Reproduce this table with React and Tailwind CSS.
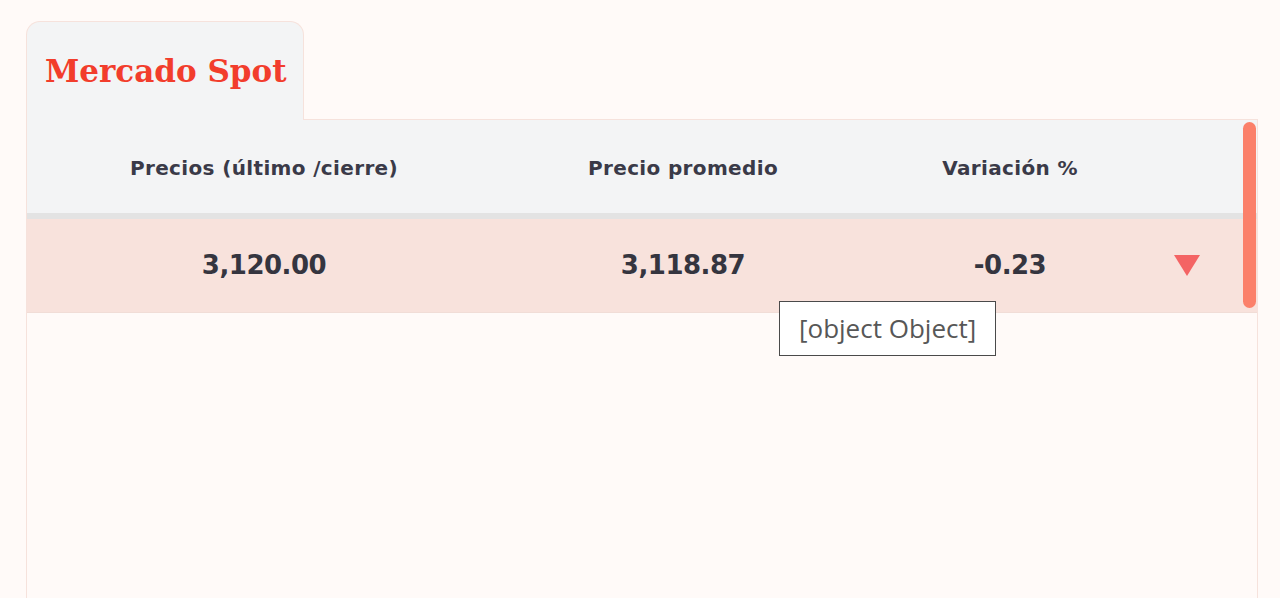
import React from "react";

const columns = [
  { label: "Precios (último /cierre)", value: "3,120.00", w: "w-[474px]" },
  { label: "Precio promedio", value: "3,118.87", w: "w-[364px]" },
  { label: "Variación %", value: "-0.23", w: "w-[290px]" },
];

function DownArrow() {
  return (
    <svg width="26" height="21" viewBox="0 0 26 21">
      <path d="M0 0 H26 L13 21 Z" fill="#f46464" />
    </svg>
  );
}

export default function App() {
  return (
    <div className="min-h-[598px] h-[598px] overflow-hidden bg-[#fffaf8] pl-[26px] pt-[21px]">
      {/* Tab */}
      <div className="relative z-10 -mb-px flex h-[99px] w-[278px] rounded-t-[14px] border border-b-0 border-[#f6e2dc] bg-[#f3f4f5] pl-[18px] pt-[34px]">
        <h1
          className="text-[31px] leading-none font-bold text-[#f23d2c]"
          style={{ fontFamily: '"DejaVu Serif", serif' }}
        >
          Mercado Spot
        </h1>
      </div>

      {/* Table */}
      <div
        className="relative h-[500px] w-[1232px] border border-b-0 border-[#f6e2dc]"
        style={{ fontFamily: '"DejaVu Sans", sans-serif' }}
      >
        <div className="flex h-[99px] items-center border-b-[6px] border-[#e3e3e3] bg-[#f3f4f5] pt-[3px]">
          {columns.map((c) => (
            <div key={c.label} className={`${c.w} text-center text-[20px] font-bold tracking-[0.35px] text-[#3a3a48]`}>
              {c.label}
            </div>
          ))}
        </div>

        <div className="flex h-[94px] items-center border-b border-[#f1ddd7] bg-[#f8e2dc]">
          {columns.map((c) => (
            <div key={c.value} className={`${c.w} text-center text-[26px] font-bold tracking-[-0.5px] text-[#35353f]`}>
              {c.value}
            </div>
          ))}
          <div className="flex w-[64px] justify-center">
            <DownArrow />
          </div>
        </div>

        {/* scrollbar thumb */}
        <div className="absolute right-[1px] top-[2px] h-[186px] w-[13px] rounded-full bg-[#fb806a]" />

        {/* tooltip */}
        <div
          className="absolute left-[752px] top-[181px] border border-[#4a4a4a] bg-white px-[19px] py-[9px] text-[26px] leading-[35px] text-[#575757]"
          style={{ fontFamily: '"Open Sans", sans-serif' }}
        >
          [object Object]
        </div>
      </div>
    </div>
  );
}
